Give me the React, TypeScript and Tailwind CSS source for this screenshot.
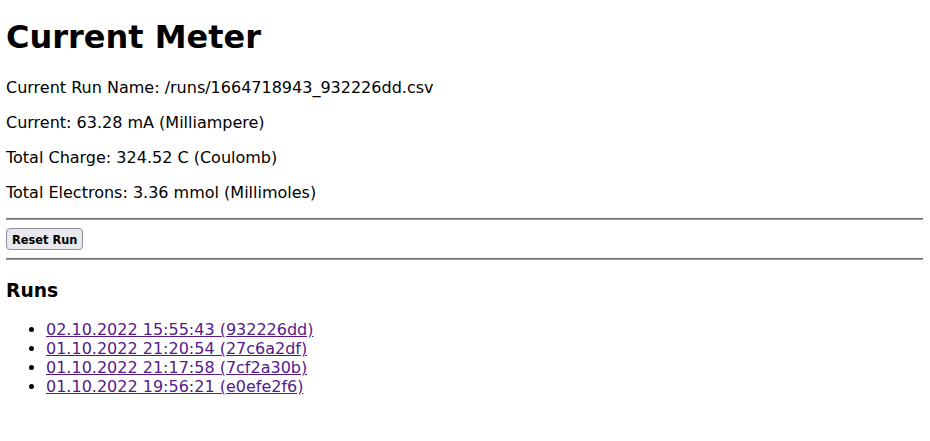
export default function App() {
  const runs = [
    "02.10.2022 15:55:43 (932226dd)",
    "01.10.2022 21:20:54 (27c6a2df)",
    "01.10.2022 21:17:58 (7cf2a30b)",
    "01.10.2022 19:56:21 (e0efe2f6)",
  ];
  return (
    <div className="bg-white text-black pl-[6px] pr-[7px] pb-2 font-['DejaVu_Sans',sans-serif] text-[16px] leading-[normal]">
      <h1 className="text-[32px] font-bold mt-[18.44px] mb-[21.44px] leading-[normal]">Current Meter</h1>
      <p className="my-4">Current Run Name: /runs/1664718943_932226dd.csv</p>
      <p className="my-4">Current: 63.28 mA (Milliampere)</p>
      <p className="my-4">Total Charge: 324.52 C (Coulomb)</p>
      <p className="my-4">Total Electrons: 3.36 mmol (Millimoles)</p>
      <hr className="my-2 h-0 border-0 border-t border-b border-t-[#6b6b6b] border-b-[#9c9c9c]" />
      <button className="flex items-center h-[22px] pt-[2px] bg-[#e9e9ed] border border-[#8f8f9d] rounded-[4px] px-[5px] text-[11.4px] font-bold font-['DejaVu_Sans',sans-serif] leading-[normal] text-black">
        Reset Run
      </button>
      <hr className="my-2 h-0 border-0 border-t border-b border-t-[#6b6b6b] border-b-[#9c9c9c]" />
      <h3 className="text-[18.72px] font-bold mt-[19.72px] mb-[19.72px] leading-[normal]">Runs</h3>
      <ul className="list-disc pl-10 my-4">
        {runs.map((r) => (
          <li key={r}>
            <a href="#" className="text-[#551a8b] underline">
              {r}
            </a>
          </li>
        ))}
      </ul>
    </div>
  );
}
